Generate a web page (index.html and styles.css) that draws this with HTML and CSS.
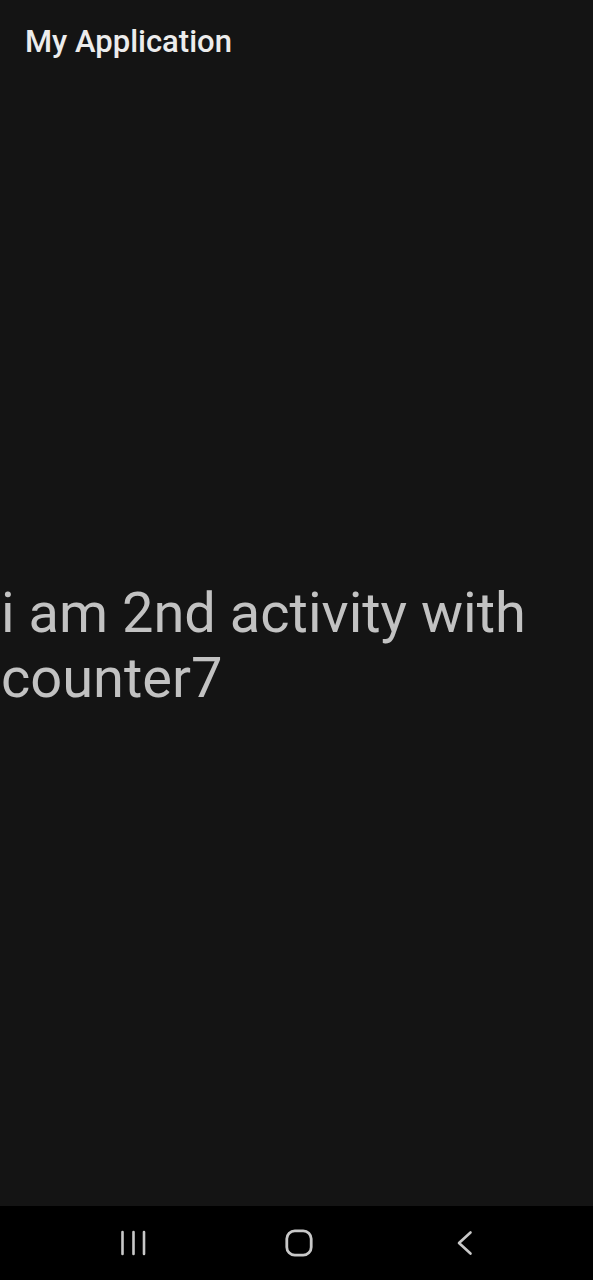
FILE: index.html
```html
<!DOCTYPE html>
<html>
<head>
<meta charset="utf-8">
<link rel="stylesheet" href="styles.css">
</head>
<body>
<div class="screen">
  <header class="appbar">My Application</header>
  <main class="content">
    <p class="message">i am 2nd activity with counter7</p>
  </main>
  <nav class="navbar">
    <svg class="nav-icon" width="28" height="28" viewBox="0 0 28 28">
      <path d="M3.5 3v22M14.5 3v22M25 3v22" stroke="#c8c8c8" stroke-width="2.6" stroke-linecap="round" fill="none"/>
    </svg>
    <svg class="nav-icon" width="28" height="28" viewBox="0 0 28 28">
      <rect x="1.8" y="1.8" width="24.4" height="24.4" rx="8" stroke="#c8c8c8" stroke-width="2.8" fill="none"/>
    </svg>
    <svg class="nav-icon" width="28" height="28" viewBox="0 0 28 28">
      <path d="M19.5 3.5L8 14l11.5 10.5" stroke="#c8c8c8" stroke-width="2.6" stroke-linecap="round" stroke-linejoin="round" fill="none"/>
    </svg>
  </nav>
</div>
</body>
</html>
```

FILE: styles.css
```css
html, body {
  margin: 0;
  padding: 0;
  background: #141414;
}
.screen {
  width: 593px;
  height: 1280px;
  display: flex;
  flex-direction: column;
  font-family: Roboto, "Noto Sans", sans-serif;
}
.appbar {
  height: 86px;
  box-sizing: border-box;
  padding: 23px 0 0 25px;
  font-size: 31px;
  font-weight: 500;
  color: #ececec;
  line-height: 38px;
}
.content {
  flex: 1;
  display: flex;
  align-items: center;
}
.message {
  margin: 0;
  padding-left: 1px;
  font-size: 56px;
  line-height: 65px;
  color: #c2c2c2;
  font-weight: 400;
}
.navbar {
  height: 74px;
  background: #000;
  display: flex;
  align-items: center;
  justify-content: flex-start;
  gap: 138px;
  padding-left: 119px;
}
.nav-icon {
  display: block;
}
```
